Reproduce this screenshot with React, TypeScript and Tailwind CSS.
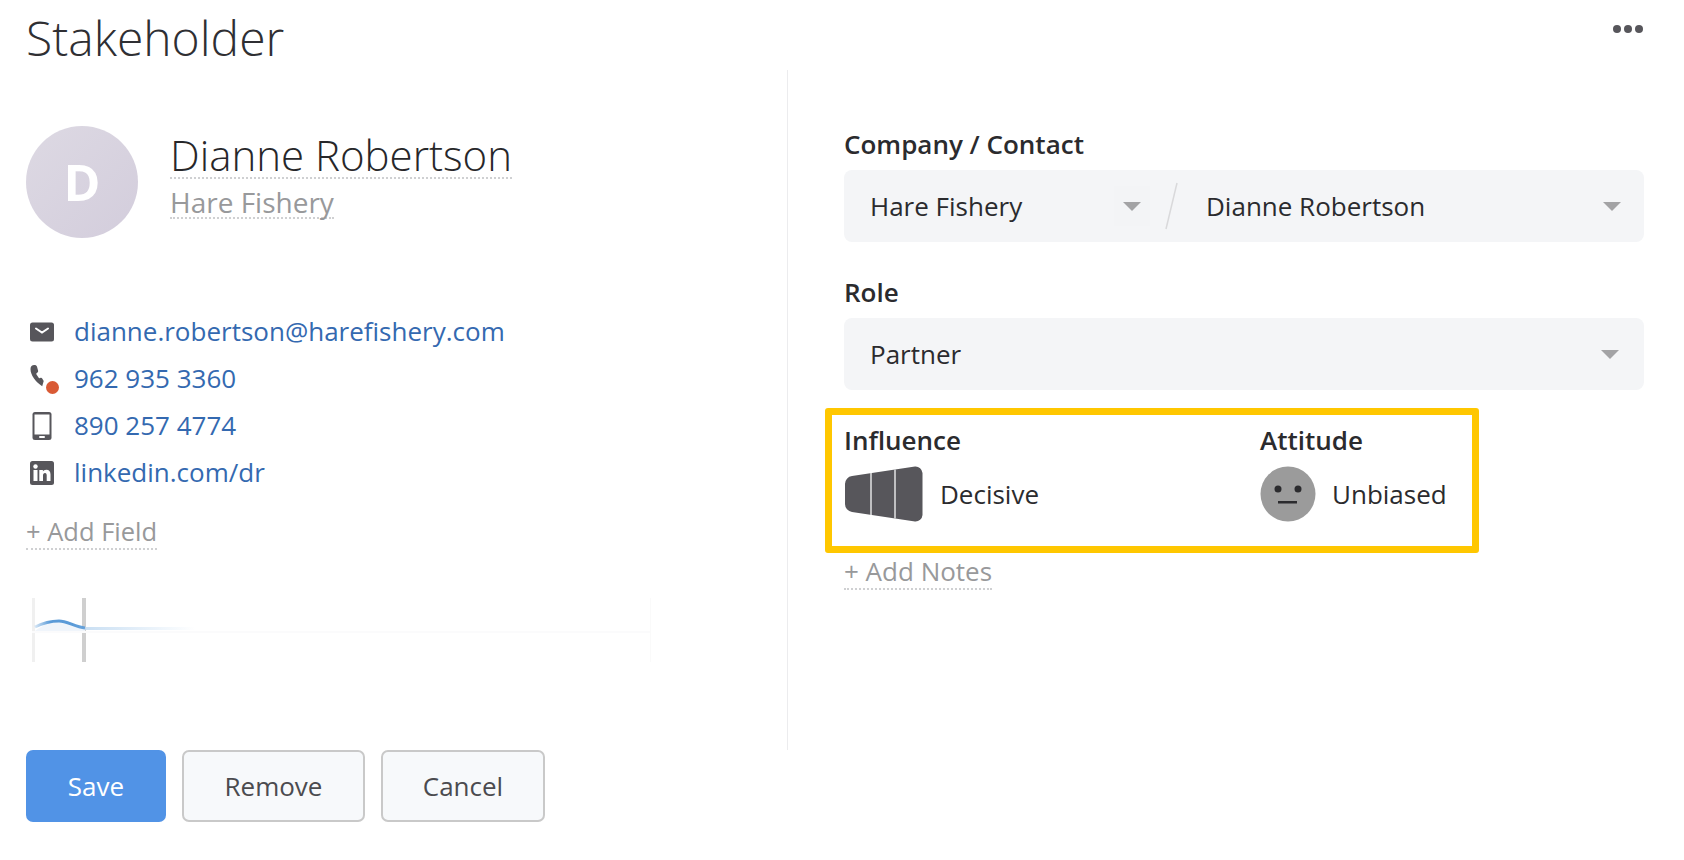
const dotted = "border-b-2 border-dotted border-[#cfd0d2]";

function MailIcon() {
  return (
    <svg width="24" height="20" viewBox="0 0 24 20">
      <rect width="24" height="19" y="0.5" rx="2.5" fill="#57565b" />
      <path d="M6 6.5l6 4 6-4" fill="none" stroke="#fff" strokeWidth="2" strokeLinecap="round" />
    </svg>
  );
}

function PhoneIcon() {
  return (
    <div className="relative h-[30px] w-7">
      <svg width="14" height="22" viewBox="0 0 14 22" className="absolute top-[1px] left-0">
        <path
          d="M0.500 4C0.500 1.500 2 0 4.200 0 5.800 0 6.700.6 7.100 2l1 3.800c.2.900-.3 1.600-1.200 2.200-.6.400-.7.800-.4 1.400l2.200 3.300c.4.500.8.600 1.400.4 1-.4 1.600-.3 2.100.4l1.500 2.400-1.500 5.300C6 17 0.500 10.500 0.500 4z"
          fill="#57565b"
        />
      </svg>
      <span className="absolute top-[17px] left-[16px] h-[13px] w-[13px] rounded-full bg-[#d95a35] ring-2 ring-white" />
    </div>
  );
}

function MobileIcon() {
  return (
    <svg width="20" height="30" viewBox="0 0 20 30" className="ml-0.5">
      <rect x="0.5" y="1" width="19" height="28" rx="2.5" fill="#57565b" />
      <rect x="2.500" y="3.500" width="15" height="20" fill="#fff" />
      <rect x="7" y="25" width="6" height="2" rx="1" fill="#fff" />
    </svg>
  );
}

function LinkedinIcon() {
  return (
    <svg width="24" height="24" viewBox="0 0 24 24">
      <rect width="24" height="24" rx="2.5" fill="#57565b" />
      <rect x="3.500" y="9" width="4" height="11" fill="#fff" />
      <circle cx="5.500" cy="5.500" r="2.200" fill="#fff" />
      <path
        d="M9.300 9h3.600v1.500c.6-1 1.800-1.800 3.300-1.800 3 0 4.300 1.800 4.300 4.700V20h-3.800v-5.800c0-1.300-.4-2.300-1.700-2.300-1.400 0-2 1-2 2.300V20H9.300z"
        fill="#fff"
      />
    </svg>
  );
}

function Caret() {
  return <div className="h-0 w-0 border-x-[9px] border-t-[9px] border-x-transparent border-t-[#a3a3a5]" />;
}

function ContactRow({ icon, text }: { icon: React.ReactNode; text: string }) {
  return (
    <div className="flex h-[47px] items-center">
      <div className="flex w-[48px] shrink-0 items-center pl-[4px]">{icon}</div>
      <a className="text-[26px] text-[#3469b0]">{text}</a>
    </div>
  );
}

function Sparkline() {
  return (
    <svg width="624" height="66" viewBox="0 0 624 66" className="ml-[3px] block">
      <defs>
        <linearGradient id="fade" x1="0" x2="1" y1="0" y2="0">
          <stop offset="0" stopColor="#5b9bd8" stopOpacity="0.25" />
          <stop offset="0.3" stopColor="#5b9bd8" stopOpacity="1" />
          <stop offset="0.75" stopColor="#5b9bd8" stopOpacity="1" />
          <stop offset="1" stopColor="#5b9bd8" stopOpacity="0.9" />
        </linearGradient>
        <linearGradient id="tail" x1="0" x2="1" y1="0" y2="0">
          <stop offset="0" stopColor="#bcd7f0" stopOpacity="0.8" />
          <stop offset="1" stopColor="#bcd7f0" stopOpacity="0" />
        </linearGradient>
      </defs>
      <rect x="3" y="0" width="3" height="64" fill="#f0f0f0" />
      <rect x="53" y="0" width="4" height="64" fill="#cfcfcf" />
      <rect x="621" y="0" width="1" height="64" fill="#fafafa" />
      <rect x="3" y="33" width="618" height="2" fill="#fbfbfc" />
      <path d="M6 33C14 27 22 23 30 23S46 29 56 30V33z" fill="#f0f5fb" />
      <path d="M6 29C14 25 22 23 30 23S46 29 56 30" fill="none" stroke="url(#fade)" strokeWidth="3" />
      <rect x="56" y="29" width="110" height="3" fill="url(#tail)" />
    </svg>
  );
}

export default function App() {
  return (
    <div className="relative flex h-[860px] w-[1684px] flex-col overflow-hidden bg-white font-['Open_Sans',sans-serif] text-[#2b2b2e]">
      <h1 className="pt-[6px] pl-[26px] text-[48px] leading-[64px] font-light text-[#2f2f33]">Stakeholder</h1>
      <div className="absolute top-[25px] right-[41px] flex gap-[3px]">
        <span className="h-[8px] w-[8px] rounded-full bg-[#57565b]" />
        <span className="h-[8px] w-[8px] rounded-full bg-[#57565b]" />
        <span className="h-[8px] w-[8px] rounded-full bg-[#57565b]" />
      </div>

      <div className="flex flex-1">
        {/* left column */}
        <div className="flex w-[787px] shrink-0 flex-col pl-[26px]">
          <div className="mt-[56px] flex items-start">
            <div className="flex h-[112px] w-[112px] shrink-0 items-center justify-center rounded-full bg-gradient-to-br from-[#ddd9e3] to-[#d3cddc] text-[50px] font-bold text-white">
              D
            </div>
            <div className="ml-[32px] flex flex-col items-start">
              <span className={`mt-[6px] text-[42px] leading-[45px] font-light text-[#27272a] ${dotted}`}>Dianne Robertson</span>
              <span className={`mt-[9px] text-[28px] leading-[29px] text-[#98999b] ${dotted}`}>Hare Fishery</span>
            </div>
          </div>

          <div className="mt-[70px] flex flex-col">
            <ContactRow icon={<MailIcon />} text="dianne.robertson@harefishery.com" />
            <ContactRow icon={<PhoneIcon />} text="962 935 3360" />
            <ContactRow icon={<MobileIcon />} text="890 257 4774" />
            <ContactRow icon={<LinkedinIcon />} text="linkedin.com/dr" />
          </div>

          <div className="mt-[19px] flex">
            <span className={`text-[25.500px] leading-[33px] text-[#98999b] ${dotted}`}>+ Add Field</span>
          </div>

          <div className="mt-[48px]">
            <Sparkline />
          </div>

          <div className="mt-[86px] flex gap-[16px]">
            <button className="flex h-[72px] w-[140px] items-center justify-center rounded-[7px] bg-[#5193e6] text-[26px] text-white">Save</button>
            <button className="flex h-[72px] w-[183px] items-center justify-center rounded-[7px] border-2 border-[#c9c9c9] bg-[#f7f9fb] text-[26px] text-[#4b4b4f]">Remove</button>
            <button className="flex h-[72px] w-[164px] items-center justify-center rounded-[7px] border-2 border-[#c9c9c9] bg-[#f7f9fb] text-[26px] text-[#4b4b4f]">Cancel</button>
          </div>
        </div>

        {/* right column */}
        <div className="mb-[110px] flex flex-1 flex-col border-l border-[#ececee] pl-[56px] pr-[40px]">
          <div className="mt-[57px] text-[26px] leading-[34px] font-semibold text-[#2b2b2e]">Company / Contact</div>
          <div className="mt-[9px] flex h-[72px] items-center rounded-[8px] bg-[#f4f5f7] text-[26px]">
            <span className="ml-[26px] w-[244px]">Hare Fishery</span>
            <div className="flex h-[40px] w-[36px] items-center justify-center bg-[#f3f4f6]">
              <Caret />
            </div>
            <svg width="16" height="48" viewBox="0 0 16 48" className="ml-[14px]">
              <path d="M13 1L2 47" stroke="#d9d9db" strokeWidth="1.500" />
            </svg>
            <span className="ml-[26px] flex-1">Dianne Robertson</span>
            <div className="mr-[23px]">
              <Caret />
            </div>
          </div>

          <div className="mt-[33px] text-[26px] leading-[34px] font-semibold">Role</div>
          <div className="mt-[9px] flex h-[72px] items-center rounded-[8px] bg-[#f4f5f7] text-[26px]">
            <span className="ml-[26px] flex-1">Partner</span>
            <div className="mr-[25px]">
              <Caret />
            </div>
          </div>

          <div className="mt-[18px] -ml-[19px] flex h-[145px] w-[654px] rounded-[3px] border-[7px] border-[#ffc700] pl-[12px]">
            <div className="w-[416px] pt-[8px]">
              <div className="text-[26px] leading-[34px] font-semibold">Influence</div>
              <div className="mt-[9px] flex items-center">
                <svg width="79" height="56" viewBox="0 0 79 56">
                  <path d="M8 10L71 0.500a7 7 0 0 1 7.500 6.500V49a7 7 0 0 1-7.500 6.500L8 46a8 8 0 0 1-7-8V18a8 8 0 0 1 7-8z" fill="#57565b" />
                  <path d="M27 7v42M51 3.500v49" stroke="#e2e2e4" strokeWidth="1.500" />
                </svg>
                <span className="ml-[17px] text-[26px]">Decisive</span>
              </div>
            </div>
            <div className="pt-[8px]">
              <div className="text-[26px] leading-[34px] font-semibold">Attitude</div>
              <div className="mt-[9px] flex items-center">
                <svg width="56" height="56" viewBox="0 0 56 56">
                  <circle cx="28" cy="28" r="27.500" fill="#9b9b9b" />
                  <circle cx="18" cy="23" r="3.500" fill="#2b2b2e" />
                  <circle cx="38" cy="23" r="3.500" fill="#2b2b2e" />
                  <rect x="18" y="35" width="19" height="2.500" fill="#2b2b2e" />
                </svg>
                <span className="ml-[16px] text-[26px]">Unbiased</span>
              </div>
            </div>
          </div>

          <div className="mt-[2px] flex">
            <span className={`text-[26px] leading-[33px] text-[#98999b] ${dotted}`}>+ Add Notes</span>
          </div>
        </div>
      </div>
    </div>
  );
}
